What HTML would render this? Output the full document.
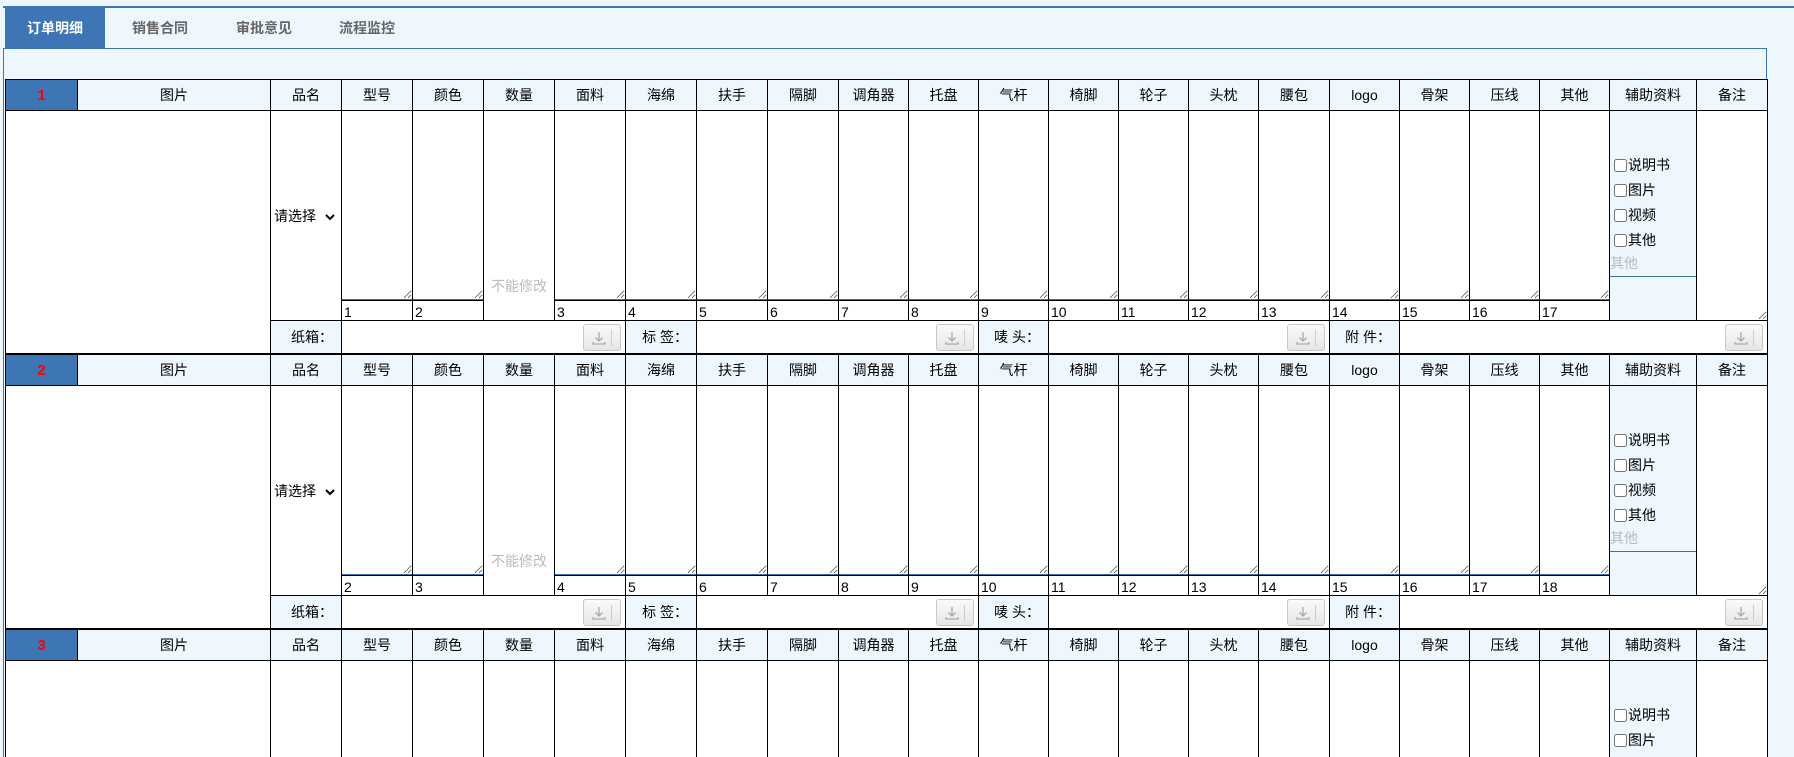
<!DOCTYPE html>
<html><head><meta charset="utf-8"><style>
*{box-sizing:border-box;margin:0;padding:0}
html,body{width:1794px;height:757px;overflow:hidden;background:#eef6fe;font-family:"Liberation Sans","Noto Sans CJK SC",sans-serif;font-size:14px;color:#000}
#wrap{position:relative;width:1794px;height:757px;overflow:hidden}
.topline{position:absolute;left:3px;top:6px;width:1791px;height:2px;background:#3d75b5}
.tabs{position:absolute;left:0;top:8px;height:40px}
.tab{position:absolute;top:0;height:40px;line-height:40px;font-weight:bold;font-size:14px;color:#666;white-space:nowrap}
.tab.act{background:#3d75b5;color:#fff;width:100px;text-align:center}
.panel{position:absolute;left:3px;top:48px;width:1764px;height:720px;border:1px solid #3d75b5;border-bottom:none}
.blk{position:absolute;left:5px;border-collapse:collapse;table-layout:fixed;width:1762px;background:#fff}
.blk td{border:1px solid #000;padding:0;vertical-align:middle;text-align:center;overflow:hidden;white-space:nowrap}
.h td{background:#eef6fe;height:31px}
.h td.no{background:#3d75b5;color:#f00;font-weight:bold;font-size:15px}
.b td{height:189px}
.n td{height:20px;text-align:left;font-size:14px;padding-left:2px;vertical-align:bottom}
.f td{height:33px}
textarea{display:block;width:100%;height:189px;border:none;border-bottom:1px solid #3c6ea8;resize:vertical;outline:none;background:#fff}
.bz textarea{height:209px;border-bottom:none}
.f td.lb{background:#eef6fe;text-align:right;padding-right:8px}
.btn{float:right;margin-right:4px;width:38px;height:27px;border:1px solid #c8c8c8;border-radius:3px;background:linear-gradient(#fafafa,#e6e6e6);position:relative}
.btn:after{content:"";position:absolute;right:8px;top:5px;width:1px;height:16px;background:#ccc}
.btn svg{position:absolute;left:7px;top:5px}
.aux{background:#eef6fe;vertical-align:top!important;text-align:left!important}
.aux .in{padding-top:44px;height:166px;border-bottom:1px solid #3c6ea8}
.aux label{display:block;height:25px;line-height:20px;padding-left:4px}
.aux input{width:13px;height:13px;vertical-align:-2px;margin-right:1px}
.gray{color:#bbb}
.sel{text-align:left!important;padding-left:3px!important}
</style></head><body><div id="wrap">
<div class="topline"></div>
<div class="tabs">
<div class="tab act" style="left:5px">订单明细</div>
<div class="tab" style="left:132px">销售合同</div>
<div class="tab" style="left:236px">审批意见</div>
<div class="tab" style="left:339px">流程监控</div>
</div>
<div class="panel"></div>

<table class="blk" style="top:79px">
<colgroup><col style="width:72px"><col style="width:193px"><col style="width:71px"><col style="width:71px"><col style="width:71px"><col style="width:71px"><col style="width:71px"><col style="width:71px"><col style="width:71px"><col style="width:71px"><col style="width:70px"><col style="width:70px"><col style="width:70px"><col style="width:70px"><col style="width:70px"><col style="width:70px"><col style="width:71px"><col style="width:70px"><col style="width:70px"><col style="width:70px"><col style="width:70px"><col style="width:87px"><col style="width:71px"></colgroup>
<tr class="h"><td class="no">1</td><td>图片</td><td>品名</td><td>型号</td><td>颜色</td><td>数量</td><td>面料</td><td>海绵</td><td>扶手</td><td>隔脚</td><td>调角器</td><td>托盘</td><td>气杆</td><td>椅脚</td><td>轮子</td><td>头枕</td><td>腰包</td><td>logo</td><td>骨架</td><td>压线</td><td>其他</td><td>辅助资料</td><td>备注</td></tr>
<tr class="b"><td colspan="2" rowspan="3"></td><td rowspan="2" class="sel">请选择 <svg width="10" height="8" viewBox="0 0 10 8" style="margin-left:5px"><path d="M1 2l4 4 4-4" stroke="#000" stroke-width="2" fill="none"/></svg></td>
<td><textarea></textarea></td><td><textarea></textarea></td><td rowspan="2" style="vertical-align:bottom;padding-bottom:24px" class="gray">不能修改</td>
<td><textarea></textarea></td><td><textarea></textarea></td><td><textarea></textarea></td><td><textarea></textarea></td><td><textarea></textarea></td><td><textarea></textarea></td><td><textarea></textarea></td><td><textarea></textarea></td><td><textarea></textarea></td><td><textarea></textarea></td><td><textarea></textarea></td><td><textarea></textarea></td><td><textarea></textarea></td><td><textarea></textarea></td><td><textarea></textarea></td>
<td rowspan="2" class="aux"><div class="in"><label><input type="checkbox">说明书</label><label><input type="checkbox">图片</label><label><input type="checkbox">视频</label><label><input type="checkbox">其他</label><div class="gray" style="line-height:16px">其他</div></div></td>
<td rowspan="2" class="bz"><textarea></textarea></td></tr>
<tr class="n"><td>1</td><td>2</td><td>3</td><td>4</td><td>5</td><td>6</td><td>7</td><td>8</td><td>9</td><td>10</td><td>11</td><td>12</td><td>13</td><td>14</td><td>15</td><td>16</td><td>17</td></tr>
<tr class="f"><td class="lb">纸箱：</td><td colspan="4"><span class="btn"><svg width="16" height="16" viewBox="0 0 16 16"><path d="M8 2v9M4.5 7.5L8 11l3.5-3.5M2 12v2h12v-2" stroke="#aaa" stroke-width="1.3" fill="none"/></svg></span></td><td class="lb">标 签：</td><td colspan="4"><span class="btn"><svg width="16" height="16" viewBox="0 0 16 16"><path d="M8 2v9M4.5 7.5L8 11l3.5-3.5M2 12v2h12v-2" stroke="#aaa" stroke-width="1.3" fill="none"/></svg></span></td><td class="lb">唛 头：</td><td colspan="4"><span class="btn"><svg width="16" height="16" viewBox="0 0 16 16"><path d="M8 2v9M4.5 7.5L8 11l3.5-3.5M2 12v2h12v-2" stroke="#aaa" stroke-width="1.3" fill="none"/></svg></span></td><td class="lb">附 件：</td><td colspan="5"><span class="btn"><svg width="16" height="16" viewBox="0 0 16 16"><path d="M8 2v9M4.5 7.5L8 11l3.5-3.5M2 12v2h12v-2" stroke="#aaa" stroke-width="1.3" fill="none"/></svg></span></td></tr>
</table>

<table class="blk" style="top:354px">
<colgroup><col style="width:72px"><col style="width:193px"><col style="width:71px"><col style="width:71px"><col style="width:71px"><col style="width:71px"><col style="width:71px"><col style="width:71px"><col style="width:71px"><col style="width:71px"><col style="width:70px"><col style="width:70px"><col style="width:70px"><col style="width:70px"><col style="width:70px"><col style="width:70px"><col style="width:71px"><col style="width:70px"><col style="width:70px"><col style="width:70px"><col style="width:70px"><col style="width:87px"><col style="width:71px"></colgroup>
<tr class="h"><td class="no">2</td><td>图片</td><td>品名</td><td>型号</td><td>颜色</td><td>数量</td><td>面料</td><td>海绵</td><td>扶手</td><td>隔脚</td><td>调角器</td><td>托盘</td><td>气杆</td><td>椅脚</td><td>轮子</td><td>头枕</td><td>腰包</td><td>logo</td><td>骨架</td><td>压线</td><td>其他</td><td>辅助资料</td><td>备注</td></tr>
<tr class="b"><td colspan="2" rowspan="3"></td><td rowspan="2" class="sel">请选择 <svg width="10" height="8" viewBox="0 0 10 8" style="margin-left:5px"><path d="M1 2l4 4 4-4" stroke="#000" stroke-width="2" fill="none"/></svg></td>
<td><textarea></textarea></td><td><textarea></textarea></td><td rowspan="2" style="vertical-align:bottom;padding-bottom:24px" class="gray">不能修改</td>
<td><textarea></textarea></td><td><textarea></textarea></td><td><textarea></textarea></td><td><textarea></textarea></td><td><textarea></textarea></td><td><textarea></textarea></td><td><textarea></textarea></td><td><textarea></textarea></td><td><textarea></textarea></td><td><textarea></textarea></td><td><textarea></textarea></td><td><textarea></textarea></td><td><textarea></textarea></td><td><textarea></textarea></td><td><textarea></textarea></td>
<td rowspan="2" class="aux"><div class="in"><label><input type="checkbox">说明书</label><label><input type="checkbox">图片</label><label><input type="checkbox">视频</label><label><input type="checkbox">其他</label><div class="gray" style="line-height:16px">其他</div></div></td>
<td rowspan="2" class="bz"><textarea></textarea></td></tr>
<tr class="n"><td>2</td><td>3</td><td>4</td><td>5</td><td>6</td><td>7</td><td>8</td><td>9</td><td>10</td><td>11</td><td>12</td><td>13</td><td>14</td><td>15</td><td>16</td><td>17</td><td>18</td></tr>
<tr class="f"><td class="lb">纸箱：</td><td colspan="4"><span class="btn"><svg width="16" height="16" viewBox="0 0 16 16"><path d="M8 2v9M4.5 7.5L8 11l3.5-3.5M2 12v2h12v-2" stroke="#aaa" stroke-width="1.3" fill="none"/></svg></span></td><td class="lb">标 签：</td><td colspan="4"><span class="btn"><svg width="16" height="16" viewBox="0 0 16 16"><path d="M8 2v9M4.5 7.5L8 11l3.5-3.5M2 12v2h12v-2" stroke="#aaa" stroke-width="1.3" fill="none"/></svg></span></td><td class="lb">唛 头：</td><td colspan="4"><span class="btn"><svg width="16" height="16" viewBox="0 0 16 16"><path d="M8 2v9M4.5 7.5L8 11l3.5-3.5M2 12v2h12v-2" stroke="#aaa" stroke-width="1.3" fill="none"/></svg></span></td><td class="lb">附 件：</td><td colspan="5"><span class="btn"><svg width="16" height="16" viewBox="0 0 16 16"><path d="M8 2v9M4.5 7.5L8 11l3.5-3.5M2 12v2h12v-2" stroke="#aaa" stroke-width="1.3" fill="none"/></svg></span></td></tr>
</table>

<table class="blk" style="top:629px">
<colgroup><col style="width:72px"><col style="width:193px"><col style="width:71px"><col style="width:71px"><col style="width:71px"><col style="width:71px"><col style="width:71px"><col style="width:71px"><col style="width:71px"><col style="width:71px"><col style="width:70px"><col style="width:70px"><col style="width:70px"><col style="width:70px"><col style="width:70px"><col style="width:70px"><col style="width:71px"><col style="width:70px"><col style="width:70px"><col style="width:70px"><col style="width:70px"><col style="width:87px"><col style="width:71px"></colgroup>
<tr class="h"><td class="no">3</td><td>图片</td><td>品名</td><td>型号</td><td>颜色</td><td>数量</td><td>面料</td><td>海绵</td><td>扶手</td><td>隔脚</td><td>调角器</td><td>托盘</td><td>气杆</td><td>椅脚</td><td>轮子</td><td>头枕</td><td>腰包</td><td>logo</td><td>骨架</td><td>压线</td><td>其他</td><td>辅助资料</td><td>备注</td></tr>
<tr class="b"><td colspan="2" rowspan="3"></td><td rowspan="2" class="sel">请选择 <svg width="10" height="8" viewBox="0 0 10 8" style="margin-left:5px"><path d="M1 2l4 4 4-4" stroke="#000" stroke-width="2" fill="none"/></svg></td>
<td><textarea></textarea></td><td><textarea></textarea></td><td rowspan="2" style="vertical-align:bottom;padding-bottom:24px" class="gray">不能修改</td>
<td><textarea></textarea></td><td><textarea></textarea></td><td><textarea></textarea></td><td><textarea></textarea></td><td><textarea></textarea></td><td><textarea></textarea></td><td><textarea></textarea></td><td><textarea></textarea></td><td><textarea></textarea></td><td><textarea></textarea></td><td><textarea></textarea></td><td><textarea></textarea></td><td><textarea></textarea></td><td><textarea></textarea></td><td><textarea></textarea></td>
<td rowspan="2" class="aux"><div class="in"><label><input type="checkbox">说明书</label><label><input type="checkbox">图片</label><label><input type="checkbox">视频</label><label><input type="checkbox">其他</label><div class="gray" style="line-height:16px">其他</div></div></td>
<td rowspan="2" class="bz"><textarea></textarea></td></tr>
<tr class="n"><td>3</td><td>4</td><td>5</td><td>6</td><td>7</td><td>8</td><td>9</td><td>10</td><td>11</td><td>12</td><td>13</td><td>14</td><td>15</td><td>16</td><td>17</td><td>18</td><td>19</td></tr>
</table>
</div></body></html>
